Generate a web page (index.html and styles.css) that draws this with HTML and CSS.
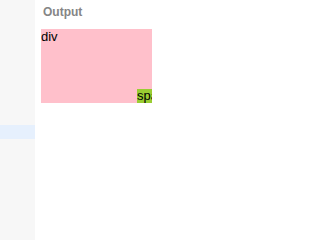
FILE: index.html
```html
<!DOCTYPE html>
<html>
<head>
<meta charset="utf-8">
<link rel="stylesheet" href="styles.css">
</head>
<body>
<div class="app">
  <aside class="sidebar">
    <div class="sidebar-active"></div>
  </aside>
  <main class="main">
    <div class="label">Output</div>
    <div class="demo">div<span class="demo-span">span</span></div>
  </main>
</div>
</body>
</html>
```
FILE: styles.css
```css
html, body {
  margin: 0;
  padding: 0;
  height: 100%;
  background: #ffffff;
}
.app {
  display: flex;
  height: 100%;
  font-family: "Liberation Sans", Arial, sans-serif;
}
.sidebar {
  width: 35px;
  flex: none;
  background: #f7f7f7;
  padding-top: 125px;
  box-sizing: border-box;
}
.sidebar-active {
  height: 14px;
  background: #e6f0fd;
}
.main {
  flex: 1;
  padding: 5px 0 0 6px;
}
.label {
  margin-left: 2px;
  font-size: 12px;
  line-height: 14px;
  font-weight: bold;
  color: #858585;
}
.demo {
  position: relative;
  overflow: hidden;
  margin-top: 10px;
  width: 111px;
  height: 74px;
  background: #ffc0cb;
  color: #000;
  font-size: 13px;
  line-height: 15px;
}
.demo-span {
  position: absolute;
  left: 96px;
  bottom: 0;
  height: 14px;
  line-height: 14px;
  background: #9acd32;
  white-space: nowrap;
}
```
